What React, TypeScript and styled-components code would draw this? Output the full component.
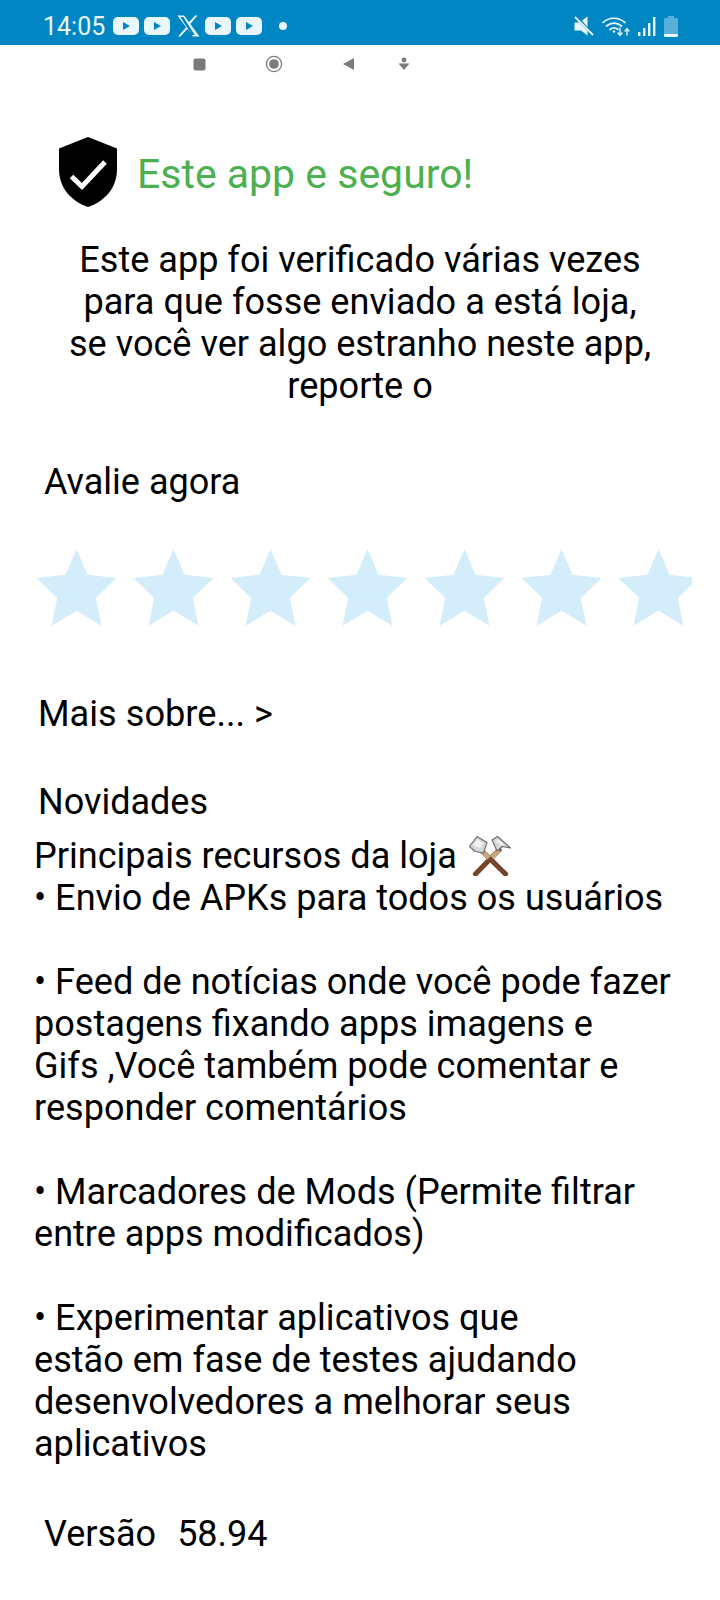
import React from "react";
import styled, { createGlobalStyle } from "styled-components";

const Global = createGlobalStyle`
  html, body { margin: 0; padding: 0; background: #fff; }
  body { font-family: Roboto, "Liberation Sans", sans-serif; color: #000; }
`;

export default function App() {
  return (
    <Page>
      <Global />
      <StatusBar>
        <StatusLeft>
          <Time>14:05</Time>
          <YouTube />
          <YouTube />
          <XLogo />
          <YouTube />
          <YouTube />
          <Dot />
        </StatusLeft>
        <StatusRight>
          <MuteIcon />
          <WifiIcon />
          <SignalIcon />
          <BatteryIcon />
        </StatusRight>
      </StatusBar>
      <NavStrip>
        <NavItem $gap={193}>
          <svg width="13" height="13" viewBox="0 0 13 13"><rect x="0.5" y="0.5" width="12" height="12" rx="2" fill="#7b7b7b" /></svg>
        </NavItem>
        <NavItem $gap={59}>
          <svg width="18" height="18" viewBox="0 0 18 18"><circle cx="9" cy="9" r="7.6" fill="none" stroke="#7b7b7b" strokeWidth="1.3" /><circle cx="9" cy="9" r="4.8" fill="#7b7b7b" /></svg>
        </NavItem>
        <NavItem $gap={59}>
          <svg width="12" height="14" viewBox="0 0 12 14"><path d="M12 1v12L1 7z" fill="#7b7b7b" /></svg>
        </NavItem>
        <NavItem $gap={44}>
          <svg width="12" height="14" viewBox="0 0 12 14"><circle cx="6" cy="3" r="2.4" fill="#7b7b7b" /><path d="M0.5 6.5h11L6 13z" fill="#7b7b7b" /></svg>
        </NavItem>
      </NavStrip>
      <Header>
        <ShieldIcon />
        <SafeTitle>Este app e seguro!</SafeTitle>
      </Header>
      <Notice>
        Este app foi verificado várias vezes
        <br />
        para que fosse enviado a está loja,
        <br />
        se você ver algo estranho neste app,
        <br />
        reporte o
      </Notice>
      <RateLabel>Avalie agora</RateLabel>
      <Stars>
        {[0, 1, 2, 3, 4, 5, 6].map((i) => (
          <Star key={i} />
        ))}
      </Stars>
      <MoreLink>Mais sobre... &gt;</MoreLink>
      <NewsTitle>Novidades</NewsTitle>
      <NewsBody>
        <NewsLine>
          Principais recursos da loja <Hammers />
        </NewsLine>
        • Envio de APKs para todos os usuários
        <br />
        <br />
        • Feed de notícias onde você pode fazer
        <br />
        postagens fixando apps imagens e
        <br />
        Gifs ,Você também pode comentar e
        <br />
        responder comentários
        <br />
        <br />
        • Marcadores de Mods (Permite filtrar
        <br />
        entre apps modificados)
        <br />
        <br />
        • Experimentar aplicativos que
        <br />
        estão em fase de testes ajudando
        <br />
        desenvolvedores a melhorar seus
        <br />
        aplicativos
      </NewsBody>
      <VersionRow>
        <span>Versão</span>
        <span>58.94</span>
      </VersionRow>
    </Page>
  );
}

function YouTube() {
  return (
    <svg width="26" height="18" viewBox="0 0 26 18">
      <rect width="26" height="18" rx="5" fill="#e9f6fc" />
      <path d="M10 5v8L17 9z" fill="#0086c3" />
    </svg>
  );
}

function XLogo() {
  return (
    <XSvg viewBox="0 0 23 22">
      <path d="M0.5 0.5h6.6l15.4 21h-6.6zM3.4 2l11.3 18h3.1L6.4 2z" fill="#e9f6fc" fillRule="evenodd" />
      <path d="M20.5 0.5h-2.4l-6.8 7.5 1.3 1.7zM9.6 11.8L1 21.5h2.4l7.4-8.1z" fill="#e9f6fc" />
    </XSvg>
  );
}

function MuteIcon() {
  return (
    <svg width="20" height="20" viewBox="0 0 20 20">
      <path d="M8 4.5L13.5 0.5v10.5zM0.5 6.5h4.5l8.5 8.5v4.5L7 14.5H0.5z" fill="#e9f6fc" />
      <path d="M1 1l18 18" stroke="#e9f6fc" strokeWidth="1.8" />
    </svg>
  );
}

function WifiIcon() {
  return (
    <svg width="28" height="21" viewBox="0 0 28 21" fill="none" stroke="#e9f6fc" strokeWidth="1.7" strokeLinecap="round">
      <path d="M1 6.5C7 .8 16 .8 23 6.5" />
      <path d="M4.5 10C9 6.2 15 6.2 19.5 10" />
      <path d="M8 13.5C10.5 11.5 13.5 11.5 16 13.5" />
      <circle cx="12" cy="15.5" r="1.2" fill="#e9f6fc" stroke="none" />
      <path d="M18 12v7M16 17l2 2.5 2-2.5M25 19v-6M23 15l2-2.5 2 2.5" strokeWidth="1.4" />
    </svg>
  );
}

function SignalIcon() {
  return (
    <svg width="18" height="19" viewBox="0 0 18 19">
      <rect x="0" y="15" width="2.4" height="4" fill="#e9f6fc" />
      <rect x="5" y="11" width="2.4" height="8" fill="#e9f6fc" />
      <rect x="10" y="6" width="2.4" height="13" fill="#e9f6fc" />
      <rect x="15" y="0" width="2.4" height="19" fill="#e9f6fc" />
    </svg>
  );
}

function BatteryIcon() {
  return (
    <svg width="14" height="21" viewBox="0 0 14 21">
      <path d="M4 0h6v2h2.5a1.5 1.5 0 0 1 1.5 1.5V19.5a1.5 1.5 0 0 1-1.5 1.5h-11A1.5 1.5 0 0 1 0 19.5V3.5A1.5 1.5 0 0 1 1.5 2H4z" fill="#58b0da" />
      <path d="M0 18h14v1.5a1.5 1.5 0 0 1-1.5 1.5h-11A1.5 1.5 0 0 1 0 19.5z" fill="#e9f6fc" />
    </svg>
  );
}

function ShieldIcon() {
  return (
    <svg width="60" height="72" viewBox="0 0 60 72">
      <path d="M30 1L59 12.5V33C59 52 47 65 30 71C13 65 1 52 1 33V12.5z" fill="#000" />
      <path d="M13.5 40.5L24 50.5L47 26" fill="none" stroke="#fff" strokeWidth="5" />
    </svg>
  );
}

function Star() {
  return (
    <StarSvg viewBox="0 0 81 77">
      <path d="M40.5 0L51.5 25.7L80.5 29L59.8 49L65.5 76.7L40.5 61.7L15.5 76.7L21.2 49L0.5 29L29.5 25.7z" fill="#d4edfb" />
    </StarSvg>
  );
}

function Hammers() {
  return (
    <HammerSvg viewBox="0 0 42 40">
      <path d="M13 15L36.5 38" stroke="#74452a" strokeWidth="5.2" strokeLinecap="round" />
      <path d="M30 14L6.5 38" stroke="#74452a" strokeWidth="5.2" strokeLinecap="round" />
      <path d="M13 15L20 22M30 14L23 21.5" stroke="#c9a97f" strokeWidth="4.6" />
      <path d="M0.5 10.5L8 0.5L18 6.5L14.5 17L6 15.5z" fill="#d6d6d6" stroke="#6a6a6a" strokeWidth="1.1" strokeLinejoin="round" />
      <path d="M23 4L28.5 0.5L41.5 12L33.5 10.5L28 15z" fill="#d6d6d6" stroke="#6a6a6a" strokeWidth="1.1" strokeLinejoin="round" />
      <path d="M4 9.5L8.5 3.5L14 7L11.5 12z" fill="#f4f4f4" />
      <path d="M27 5L29 3.5L36 9.5L31 8.5z" fill="#f4f4f4" />
    </HammerSvg>
  );
}

const Page = styled.div`
  width: 720px;
  height: 1600px;
  overflow: hidden;
  background: #fff;
`;

const StatusBar = styled.div`
  height: 45px;
  box-sizing: border-box;
  background: #0086c3;
  display: flex;
  align-items: center;
  justify-content: space-between;
  padding: 7px 42px 0 43px;
`;

const StatusLeft = styled.div`
  display: flex;
  align-items: center;
  gap: 5px;
`;

const Time = styled.span`
  font-size: 25px;
  color: #e9f6fc;
  margin-right: 3px;
`;

const XSvg = styled.svg`
  width: 23px;
  height: 22px;
  margin-left: 2px;
`;

const Dot = styled.span`
  width: 8px;
  height: 8px;
  border-radius: 50%;
  background: #e9f6fc;
  margin-left: 12px;
`;

const StatusRight = styled.div`
  display: flex;
  align-items: center;
  gap: 8px;
`;

const NavStrip = styled.div`
  height: 38px;
  display: flex;
  align-items: center;
`;

const NavItem = styled.span<{ $gap: number }>`
  display: flex;
  margin-left: ${(p) => p.$gap}px;
`;

const Header = styled.div`
  display: flex;
  align-items: center;
  gap: 19px;
  padding: 53px 0 0 58px;
`;

const SafeTitle = styled.h1`
  margin: 0;
  padding-top: 4px;
  font-size: 41px;
  line-height: 48px;
  font-weight: 400;
  color: #4caf50;
`;

const Notice = styled.p`
  margin: 31px 0 0;
  font-size: 36.1px;
  line-height: 42px;
  text-align: center;
`;

const RateLabel = styled.div`
  font-size: 36px;
  line-height: 42px;
  margin: 54px 0 0 44px;
`;

const Stars = styled.div`
  display: flex;
  gap: 16px;
  width: 656px;
  overflow: hidden;
  margin: 46px 0 0 36px;
`;

const StarSvg = styled.svg`
  width: 81px;
  height: 77px;
  flex: none;
`;

const MoreLink = styled.div`
  font-size: 36.2px;
  line-height: 42px;
  margin: 67px 0 0 38px;
`;

const NewsTitle = styled.div`
  font-size: 36px;
  line-height: 42px;
  margin: 46px 0 0 38px;
`;

const NewsBody = styled.div`
  font-size: 36.1px;
  line-height: 42px;
  margin: 12px 0 0 34px;
`;

const NewsLine = styled.div`
  display: flex;
  align-items: center;
  gap: 12px;
  height: 42px;
`;

const HammerSvg = styled.svg`
  width: 42px;
  height: 40px;
`;

const VersionRow = styled.div`
  display: flex;
  gap: 21px;
  font-size: 36px;
  line-height: 42px;
  margin: 48px 0 0 44px;
`;
